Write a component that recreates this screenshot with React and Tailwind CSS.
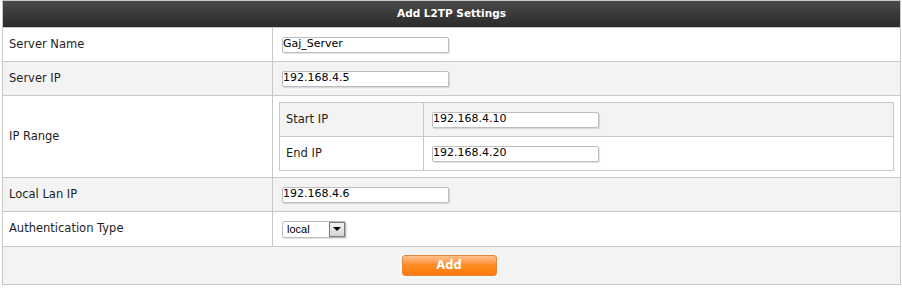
const font = { fontFamily: '"DejaVu Sans", Verdana, sans-serif' };

function TextBox({ value }) {
  return (
    <div className="flex h-[16px] w-[167px] items-center rounded-[2px] border border-[#bdbdbd] bg-white text-[11px] text-black shadow-[1px_1px_1px_rgba(0,0,0,0.12)]">
      {value}
    </div>
  );
}

function Row({ label, bg, children, height = "h-[34px]" }) {
  return (
    <div className={`flex border-t border-[#c8c8c8] ${bg} ${height}`}>
      <div className="flex w-[269px] items-center pl-[6px] text-[11.5px] text-[#1e1e1e]">{label}</div>
      <div className="flex flex-1 items-center border-l border-[#c8c8c8] pl-[9px]">{children}</div>
    </div>
  );
}

function InnerRow({ label, value, bg, first }) {
  return (
    <div className={`flex ${first ? "h-[33px]" : "h-[34px] border-t border-[#c8c8c8]"} ${bg}`}>
      <div className="flex w-[143px] items-center pl-[6px] text-[11.5px] text-[#1e1e1e]">{label}</div>
      <div className="flex flex-1 items-center border-l border-[#c8c8c8] pl-[8px]">
        <TextBox value={value} />
      </div>
    </div>
  );
}

export default function App() {
  return (
    <div className="h-[288px] w-[902px] bg-white" style={font}>
      <div className="ml-[2px] w-[899px] border border-[#c8c8c8]">
        <div className="flex h-[26px] items-center justify-center bg-gradient-to-b from-[#4b4b4b] to-[#2a2a2a] text-[10.5px] font-bold text-white">
          Add L2TP Settings
        </div>

        <Row label="Server Name" bg="bg-white">
          <TextBox value="Gaj_Server" />
        </Row>
        <Row label="Server IP" bg="bg-[#f3f3f3]">
          <TextBox value="192.168.4.5" />
        </Row>

        <div className="flex h-[82px] border-t border-[#c8c8c8] bg-white">
          <div className="flex w-[269px] items-center pl-[6px] text-[11.5px] text-[#1e1e1e]">IP Range</div>
          <div className="flex-1 border-l border-[#c8c8c8] px-[6px] pt-[6px]">
            <div className="w-[615px] border border-[#c8c8c8]">
              <InnerRow label="Start IP" value="192.168.4.10" bg="bg-[#f3f3f3]" first />
              <InnerRow label="End IP" value="192.168.4.20" bg="bg-white" />
            </div>
          </div>
        </div>

        <Row label="Local Lan IP" bg="bg-[#f3f3f3]">
          <TextBox value="192.168.4.6" />
        </Row>
        <Row label="Authentication Type" bg="bg-white" height="h-[35px]">
          <div className="flex h-[17px] w-[64px] items-center rounded-[2px] border border-[#bdbdbd] bg-white shadow-[1px_1px_1px_rgba(0,0,0,0.12)]">
            <span className="flex-1 pl-[4px] text-[11px] text-black" style={{ fontFamily: '"Liberation Sans", Arial, sans-serif' }}>
              local
            </span>
            <div className="flex h-[15px] w-[16px] items-center justify-center border border-[#7a7a7a] bg-gradient-to-b from-[#f2f2f2] to-[#d4d4d4]">
              <div className="h-0 w-0 border-x-[4px] border-t-[4px] border-x-transparent border-t-black" />
            </div>
          </div>
        </Row>

        <div className="flex h-[38px] items-center justify-center border-t border-[#c8c8c8] bg-[#f3f3f3] pr-[5px]">
          <div className="rounded-[2px] bg-[#f7f7f7] p-[2px]">
            <button className="flex h-[21px] w-[95px] items-center justify-center rounded-[3px] border border-[#e2873a] bg-gradient-to-b from-[#ffc08a] via-[#ff8a1e] to-[#ff7a0e] text-[11.5px] font-bold text-white">
              Add
            </button>
          </div>
        </div>
      </div>
    </div>
  );
}
